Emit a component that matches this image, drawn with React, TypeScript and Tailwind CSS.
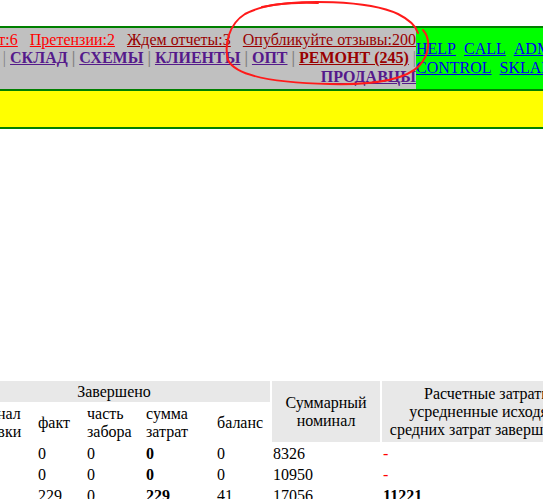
import React from 'react'

const sep = <span className="text-[#808080]"> | </span>

export default function App() {
  return (
    <div className="relative w-[543px] h-[499px] overflow-hidden bg-white font-['Liberation_Serif',serif] text-[16px] text-black">
      {/* top menu */}
      <div className="mt-[26px] flex h-[65px] border-y-2 border-[#008000]">
        <div className="w-[416px] bg-[#c0c0c0] flex flex-col justify-center items-end whitespace-nowrap leading-[18.4px]">
          <div className="flex gap-[12px]">
            <a className="text-[#ff0000] underline">т:6</a>
            <a className="text-[#ff0000] underline">Претензии:2</a>
            <a className="text-[#990000] underline">Ждем отчеты:3</a>
            <a className="text-[#990000] underline">Опубликуйте отзывы:200</a>
          </div>
          <div className="font-bold">
            <span className="text-[#808080] font-normal">| </span>
            <a className="text-[#551a8b] underline">СКЛАД</a>
            {sep}
            <a className="text-[#551a8b] underline">СХЕМЫ</a>
            {sep}
            <a className="text-[#551a8b] underline">КЛИЕНТЫ</a>
            {sep}
            <a className="text-[#551a8b] underline">ОПТ</a>
            {sep}
            <a className="text-[#990000] underline">РЕМОНТ (245)</a>
            <span className="text-[#808080] font-normal"> |</span>
          </div>
          <div className="font-bold">
            <a className="text-[#551a8b] underline">ПРОДАВЦЫ</a>
          </div>
        </div>
        <div className="flex-1 bg-[#00ff00] flex flex-col justify-center whitespace-nowrap leading-[18.4px] text-[#0000ee]">
          <div className="flex gap-[8px]">
            <a className="underline">HELP</a>
            <a className="underline">CALL</a>
            <a className="underline">ADMIN</a>
          </div>
          <div className="flex gap-[8px]">
            <a className="underline">CONTROL</a>
            <a className="underline">SKLAD</a>
          </div>
        </div>
      </div>
      <div className="h-[38px] bg-[#ffff00] border-b-2 border-[#008000]" />

      {/* report table */}
      <div className="mt-[250px]">
        <table className="-ml-[44px] w-[640px] table-fixed border-separate border-spacing-[2px]">
          <colgroup>
            <col className="w-[77px]" />
            <col className="w-[47px]" />
            <col className="w-[57px]" />
            <col className="w-[69px]" />
            <col className="w-[54px]" />
            <col className="w-[108px]" />
            <col className="w-[212px]" />
          </colgroup>
          <thead className="leading-[18px]">
            <tr>
              <th colSpan={5} className="h-[21px] p-px bg-[#e8e8e8] font-normal">Завершено</th>
              <th rowSpan={2} className="p-px bg-[#e8e8e8] font-normal">Суммарный<br />номинал</th>
              <th rowSpan={2} className="p-px bg-[#e8e8e8] font-normal whitespace-nowrap">
                Расчетные затраты<br />усредненные исходя из<br />средних затрат завершенных
              </th>
            </tr>
            <tr className="text-left">
              <th className="h-[37px] p-px font-normal">Номинал<br />поставки</th>
              <th className="p-px font-normal">факт</th>
              <th className="p-px font-normal">часть<br />забора</th>
              <th className="p-px font-normal">сумма<br />затрат</th>
              <th className="p-px font-normal">баланс</th>
            </tr>
          </thead>
          <tbody className="leading-[19px]">
            <tr>
              <td className="h-[19px] px-px py-0"></td>
              <td className="px-px py-0">0</td>
              <td className="px-px py-0">0</td>
              <td className="px-px py-0 font-bold">0</td>
              <td className="px-px py-0">0</td>
              <td className="px-px py-0">8326</td>
              <td className="px-px py-0 text-[#ff0000]">-</td>
            </tr>
            <tr>
              <td className="h-[19px] px-px py-0"></td>
              <td className="px-px py-0">0</td>
              <td className="px-px py-0">0</td>
              <td className="px-px py-0 font-bold">0</td>
              <td className="px-px py-0">0</td>
              <td className="px-px py-0">10950</td>
              <td className="px-px py-0 text-[#ff0000]">-</td>
            </tr>
            <tr>
              <td className="h-[19px] px-px py-0"></td>
              <td className="px-px py-0">229</td>
              <td className="px-px py-0">0</td>
              <td className="px-px py-0 font-bold">229</td>
              <td className="px-px py-0">41</td>
              <td className="px-px py-0">17056</td>
              <td className="px-px py-0 font-bold">11221</td>
            </tr>
          </tbody>
        </table>
      </div>

      {/* hand-drawn marker around the reviews link */}
      <svg className="absolute inset-0 pointer-events-none" width="543" height="499" viewBox="0 0 543 499" fill="none">
        <path
          d="M318 3 C290 2 262 5 245 14 C229 24 224 44 228 60 C236 77 280 83 330 84 C372 85 405 80 419 66 C431 53 430 38 423 30"
          stroke="#ff1a1a"
          strokeWidth="2"
          strokeLinecap="round"
        />
        <path
          d="M262 7 C300 -1 368 0 398 14 C410 20 416 26 418 33"
          stroke="#ff1a1a"
          strokeWidth="2"
          strokeLinecap="round"
        />
      </svg>
    </div>
  )
}
